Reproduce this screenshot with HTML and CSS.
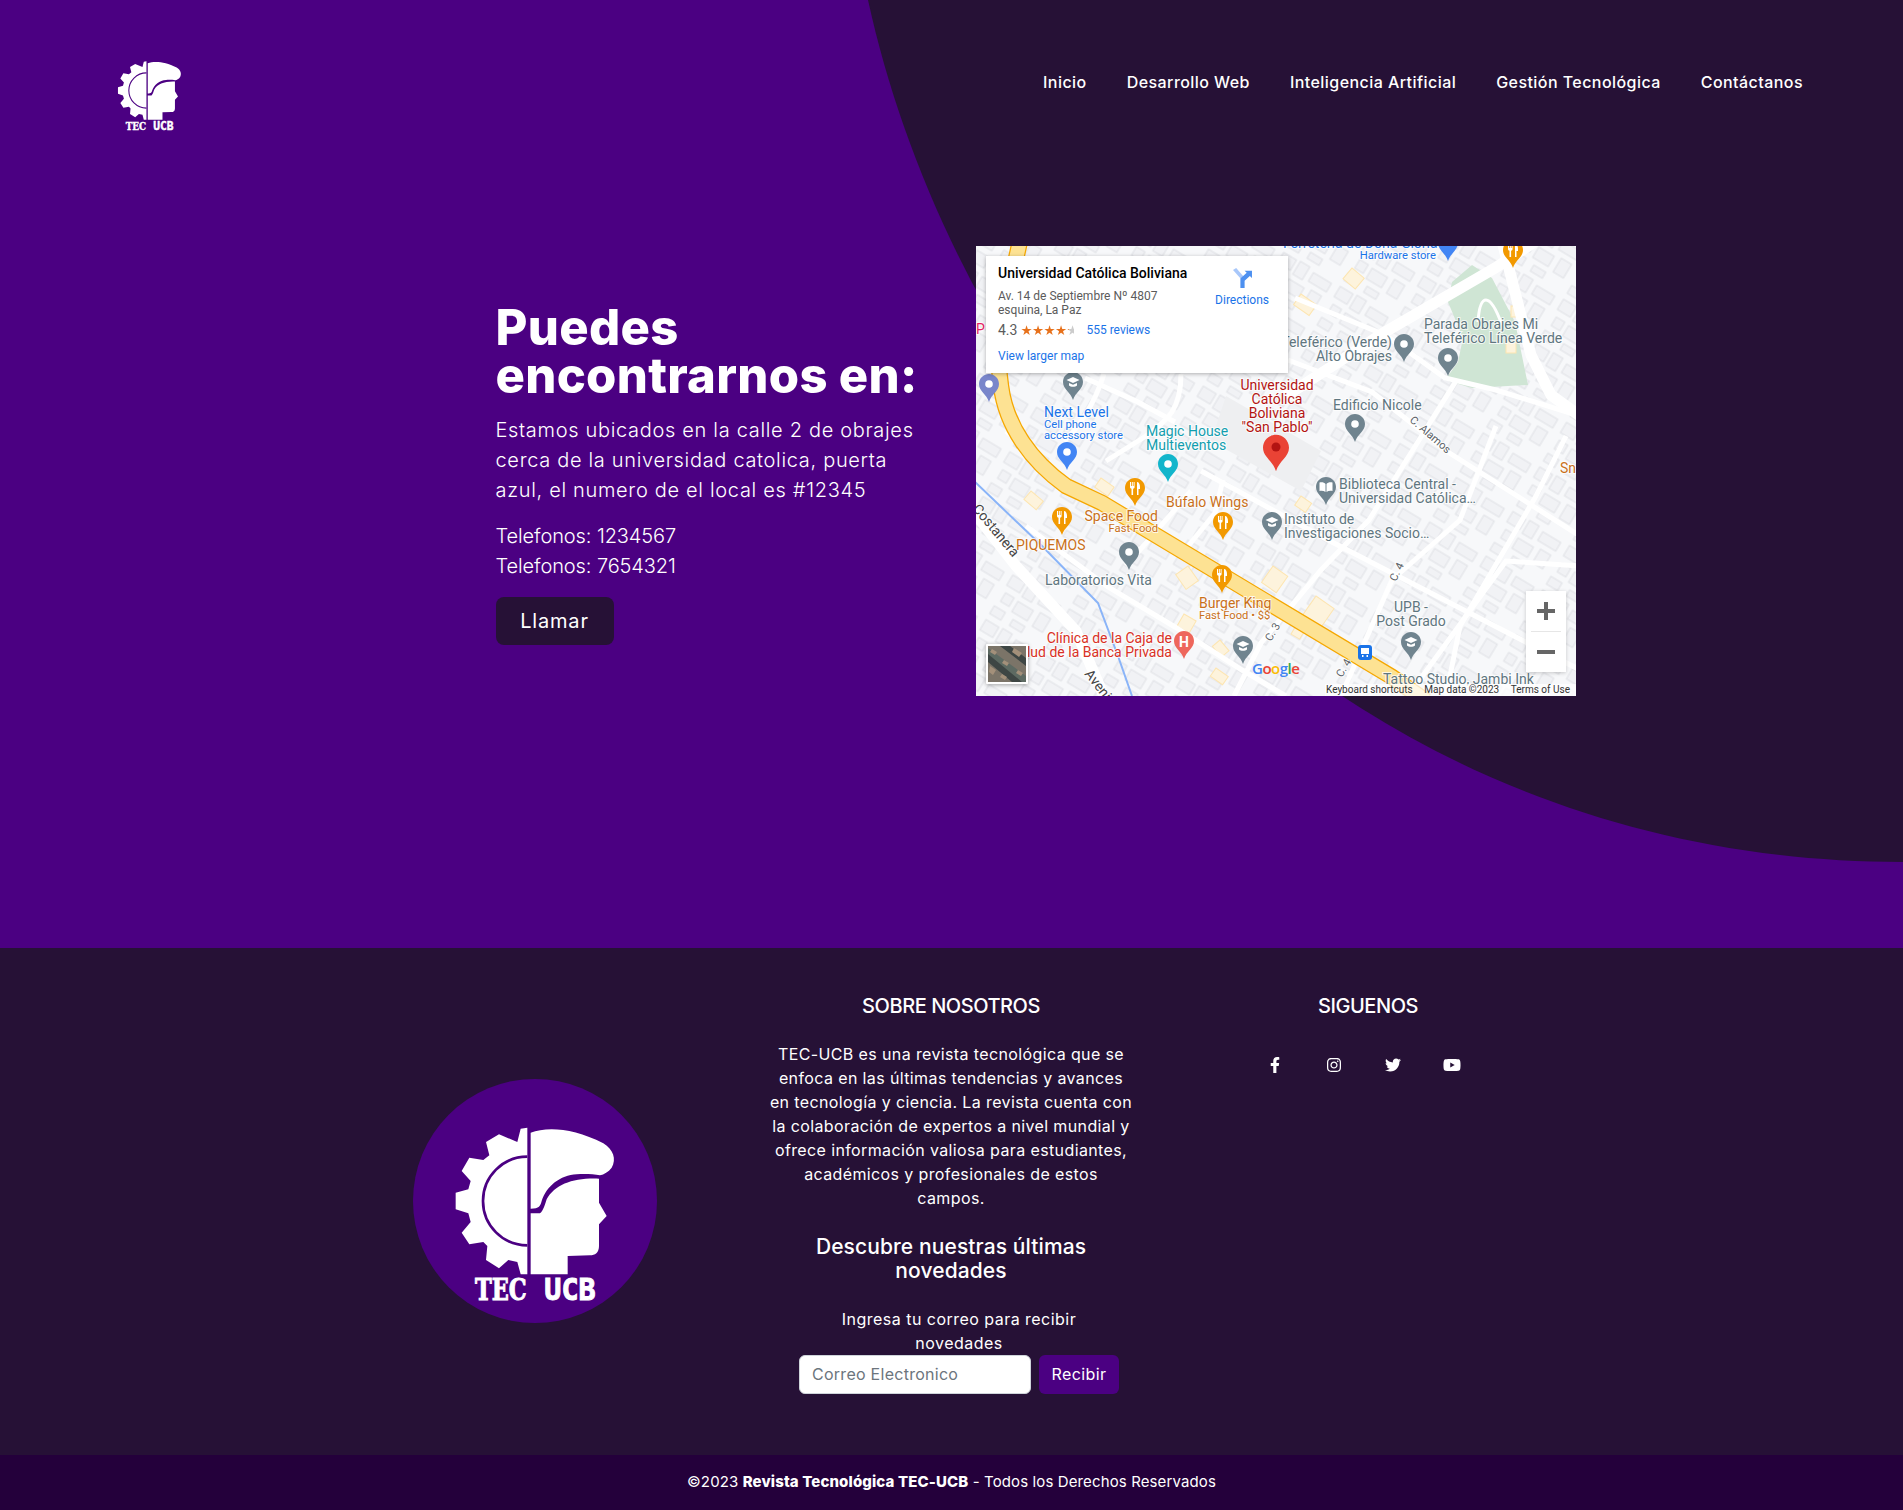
FILE: index.html
```html
<!DOCTYPE html>
<html lang="es">
<head>
<meta charset="utf-8">
<title>TEC-UCB</title>
<link rel="stylesheet" href="styles.css">
</head>
<body>
<svg class="defs" width="0" height="0" aria-hidden="true">
  <defs>
    <symbol id="logo" viewBox="39 29 732 732">
      <path class="w" d="M392 190C440 172 520 175 610 222C640 240 650 270 635 295C625 308 612 315 600 318C580 314 550 313 530 315C480 318 440 350 425 395C421 410 418 418 392 418Z"/>
      <path class="w" d="M392 432H420C430 425 435 405 440 390C465 345 520 325 597 328V400L620 440L597 465V530C597 550 585 558 570 558L503 560V615H392Z"/>
      <path class="w" d="M382 175L362 178L352 218L297 195L258 218L268 258L250 272L208 265L185 305L212 335L205 360L167 370V420L205 432L212 458L185 490L208 525L250 518L262 530L258 572L297 597L325 572L352 578L362 615H382Z"/>
      <path class="logo-arc" d="M382 262A131 131 0 0 0 382 528"/>
      <text class="logo-text slab" x="225" y="693" textLength="155" lengthAdjust="spacingAndGlyphs">TEC</text>
      <text class="logo-text" x="433" y="693" textLength="154" lengthAdjust="spacingAndGlyphs">UCB</text>
    </symbol>
    <symbol id="pin" viewBox="0 0 20 28"><path d="M10 0C4.500 0 0 4.400 0 10c0 7 7.500 10 10 18 2.500-8 10-11 10-18C20 4.400 15.500 0 10 0z"/></symbol>
    <symbol id="pin-dot" viewBox="0 0 20 28"><path d="M10 0C4.500 0 0 4.400 0 10c0 7 7.500 10 10 18 2.500-8 10-11 10-18C20 4.400 15.500 0 10 0z"/><circle class="w" cx="10" cy="10" r="3.800"/></symbol>
    <symbol id="pin-food" viewBox="0 0 20 28"><path d="M10 0C4.500 0 0 4.400 0 10c0 7 7.500 10 10 18 2.500-8 10-11 10-18C20 4.400 15.500 0 10 0z"/><path class="w" d="M5 4h1v4h.8V4h1v4h.8V4h1v5c0 1-.7 1.600-1.500 1.800V17H6.500v-6.200C5.700 10.600 5 10 5 9zM12 4c1.800 0 3 2 3 5v2h-1.500v6H12z"/></symbol>
    <symbol id="pin-grad" viewBox="0 0 20 28"><path d="M10 0C4.500 0 0 4.400 0 10c0 7 7.500 10 10 18 2.500-8 10-11 10-18C20 4.400 15.500 0 10 0z"/><path class="w" d="M10 5L3.500 8L10 11L16.500 8zM6 11V13.500C7.500 15.200 12.500 15.200 14 13.500V11L10 12.800z"/></symbol>
    <symbol id="pin-book" viewBox="0 0 20 28"><path d="M10 0C4.500 0 0 4.400 0 10c0 7 7.500 10 10 18 2.500-8 10-11 10-18C20 4.400 15.500 0 10 0z"/><path class="w" d="M3.500 5.500C6 5 8.500 5.500 9.500 7v8C8 14 6 13.600 3.500 14zM16.500 5.500C14 5 11.500 5.500 10.500 7v8C12 14 14 13.600 16.500 14z"/></symbol>
    <pattern id="blocks" width="66" height="52" patternUnits="userSpaceOnUse" patternTransform="rotate(31)">
      <rect class="bld" x="3" y="3" width="15" height="12"/>
      <rect class="bld" x="22" y="2" width="11" height="15"/>
      <rect class="bld" x="39" y="5" width="21" height="10"/>
      <rect class="bld" x="6" y="22" width="10" height="10"/>
      <rect class="bld" x="21" y="23" width="18" height="12"/>
      <rect class="bld" x="46" y="21" width="12" height="16"/>
      <rect class="bld" x="3" y="39" width="13" height="9"/>
      <rect class="bld" x="26" y="41" width="14" height="7"/>
    </pattern>
  </defs>
</svg>

<section class="hero">
  <svg class="blob" viewBox="0 0 1903 948" aria-hidden="true"><path d="M868 0C960 420 1330 862 1903 862V0Z"/></svg>
  <header class="topbar">
    <svg class="logo-small" role="img" aria-label="TEC UCB"><use href="#logo"/></svg>
    <nav class="nav">
      <a href="#">Inicio</a>
      <a href="#">Desarrollo Web</a>
      <a href="#">Inteligencia Artificial</a>
      <a href="#">Gestión Tecnológica</a>
      <a href="#">Contáctanos</a>
    </nav>
  </header>
  <div class="hero-body">
    <div class="hero-text">
      <h1>Puedes<br>encontrarnos en:</h1>
      <p class="lead">Estamos ubicados en la calle 2 de obrajes<br>cerca de la universidad catolica, puerta<br>azul, el numero de el local es #12345</p>
      <p class="phones">Telefonos: 1234567<br>Telefonos: 7654321</p>
      <a class="call" href="#">Llamar</a>
    </div>
    <div class="map">
      <svg class="map-art" viewBox="0 0 600 450" width="600" height="450">
        <rect class="land" width="600" height="450"/>
        <rect width="600" height="450" fill="url(#blocks)"/>
        <polygon class="campus" points="250,150 345,205 325,245 235,195"/>
        <polygon class="park" points="476,36 496,19 516,32 539,76 552,139 496,142 469,134 482,116 487,92 472,56"/>
        <path class="rd-thin" d="M502 76C503 60 506 54 510 54C516 54 522 68 526 79"/>
        <g class="yb">
          <rect x="0" y="0" width="19" height="13" transform="translate(325 48) rotate(35)"/>
          <rect x="0" y="0" width="16" height="14" transform="translate(376 22) rotate(40)"/>
          <rect x="0" y="0" width="10" height="11" transform="translate(535 60)"/>
          <rect x="0" y="0" width="10" height="11" transform="translate(530 96)"/>
          <rect x="0" y="0" width="16" height="11" transform="translate(55 245) rotate(40)"/>
          <rect x="0" y="0" width="16" height="11" transform="translate(125 232) rotate(35)"/>
          <rect x="0" y="0" width="18" height="15" transform="translate(212 320) rotate(55)"/>
          <rect x="0" y="0" width="13" height="11" transform="translate(325 250) rotate(35)"/>
          <rect x="0" y="0" width="18" height="20" transform="translate(297 320) rotate(35)"/>
          <rect x="0" y="0" width="22" height="25" transform="translate(340 350) rotate(35)"/>
          <rect x="0" y="0" width="14" height="14" transform="translate(208 368) rotate(30)"/>
          <rect x="0" y="0" width="14" height="10" transform="translate(244 394) rotate(50)"/>
          <rect x="0" y="0" width="15" height="10" transform="translate(240 422) rotate(35)"/>
          <rect x="0" y="0" width="10" height="14" transform="translate(322 376) rotate(30)"/>
        </g>
        <g class="rd">
          <path d="M109 132L162 156L199 176"/>
          <path d="M225 225L352 294L604 424"/>
          <path d="M312 114L396 146L472 206L604 290"/>
          <path d="M319 52L409 89L469 132L520 144L604 170"/>
          <path d="M50 280L132 341L199 381L266 424L310 450"/>
          <path d="M209 304L239 267L247 234"/>
          <path d="M258 450L285 397L345 324L393 274L480 135"/>
          <path d="M365 450L416 334L484 274L520 180"/>
          <path d="M470 450L484 380L560 250L590 190"/>
          <path d="M205 128C205 165 190 175 170 190L130 215"/>
          <path d="M128 128C118 160 100 185 88 195"/>
          <path d="M30 185L110 250"/>
          <path d="M432 450L530 315L604 320"/>
          <path d="M150 320L215 245"/>
        </g>
        <g class="rd-wide">
          <path d="M310 150L409 86L519 22L560 -5"/>
          <path d="M526 -5L555 109L575 149L604 170"/>
          <path d="M-5 262L40 320L100 385L130 455"/>
        </g>
        <path class="river" d="M-1 236L66 300L122 357L142 410L156 450"/>
        <path class="main-out" d="M44 -5C32 50 18 100 25 140C30 180 55 215 90 240L126 257L416 431L450 455"/>
        <path class="main-in" d="M44 -5C32 50 18 100 25 140C30 180 55 215 90 240L126 257L416 431L450 455"/>

        <text class="lb blue" x="307" y="2">Ferretería de Doña Gloria</text>
        <text class="lb blue sm" x="460" y="13" text-anchor="end">Hardware store</text>
        <text class="lb pink" x="0" y="88">P</text>
        <text class="lb gray" x="448" y="83">Parada Obrajes Mi</text>
        <text class="lb gray" x="448" y="97">Teleférico Línea Verde</text>
        <text class="lb gray" x="416" y="101" text-anchor="end">Teleférico (Verde)</text>
        <text class="lb gray" x="416" y="115" text-anchor="end">Alto Obrajes</text>
        <text class="lb gray" x="357" y="164">Edificio Nicole</text>
        <text class="lb road" transform="translate(433 175) rotate(41)">C. Alamos</text>
        <text class="lb red" x="301" y="144" text-anchor="middle">Universidad</text>
        <text class="lb red" x="301" y="158" text-anchor="middle">Católica</text>
        <text class="lb red" x="301" y="172" text-anchor="middle">Boliviana</text>
        <text class="lb red" x="301" y="186" text-anchor="middle">"San Pablo"</text>
        <text class="lb orange" x="584" y="227">Sn</text>
        <text class="lb gray" x="363" y="243">Biblioteca Central -</text>
        <text class="lb gray" x="363" y="257">Universidad Católica…</text>
        <text class="lb gray" x="308" y="278">Instituto de</text>
        <text class="lb gray" x="308" y="292">Investigaciones Socio…</text>
        <text class="lb orange" x="190" y="261">Búfalo Wings</text>
        <text class="lb orange" x="182" y="275" text-anchor="end">Space Food</text>
        <text class="lb orange sm" x="182" y="286" text-anchor="end">Fast Food</text>
        <text class="lb orange" x="40" y="304">PIQUEMOS</text>
        <text class="lb gray" x="69" y="339">Laboratorios Vita</text>
        <text class="lb orange" x="223" y="362">Burger King</text>
        <text class="lb orange sm" x="223" y="373">Fast Food • $$</text>
        <text class="lb hosp" x="196" y="397" text-anchor="end">Clínica de la Caja de</text>
        <text class="lb hosp" x="196" y="411" text-anchor="end">Salud de la Banca Privada</text>
        <text class="lb gray" x="435" y="366" text-anchor="middle">UPB -</text>
        <text class="lb gray" x="435" y="380" text-anchor="middle">Post Grado</text>
        <text class="lb gray" x="407" y="438">Tattoo Studio, Jambi Ink</text>
        <text class="lb road" transform="translate(295 396) rotate(-60)">C. 3</text>
        <text class="lb road" transform="translate(420 336) rotate(-65)">C. 4</text>
        <text class="lb road" transform="translate(366 432) rotate(-60)">C. 4</text>
        <text class="lb road lg" transform="translate(-4 263) rotate(50)">Costanera</text>
        <text class="lb road lg" transform="translate(108 428) rotate(52)">Avenida</text>
        <text class="lb blue" x="68" y="171">Next Level</text>
        <text class="lb blue sm" x="68" y="182">Cell phone</text>
        <text class="lb blue sm" x="68" y="193">accessory store</text>
        <text class="lb teal" x="170" y="190">Magic House</text>
        <text class="lb teal" x="170" y="204">Multieventos</text>
        <text class="google" x="276" y="428"><tspan fill="#4285f4">G</tspan><tspan fill="#ea4335">o</tspan><tspan fill="#fbbc04">o</tspan><tspan fill="#4285f4">g</tspan><tspan fill="#34a853">l</tspan><tspan fill="#ea4335">e</tspan></text>

        <use class="p-orange" href="#pin-food" x="527" y="-6" width="20" height="28"/>
        <use class="p-blue" href="#pin" x="462" y="-13" width="20" height="28"/>
        <use class="p-gray" href="#pin-dot" x="418" y="88" width="20" height="28"/>
        <use class="p-gray" href="#pin-dot" x="462" y="102" width="20" height="28"/>
        <use class="p-gray" href="#pin-dot" x="369" y="168" width="20" height="28"/>
        <use class="p-gray" href="#pin-grad" x="87" y="126" width="20" height="28"/>
        <use class="p-fuel" href="#pin-dot" x="3" y="128" width="20" height="28"/>
        <use class="p-blue" href="#pin-dot" x="81" y="196" width="20" height="28"/>
        <use class="p-teal" href="#pin-dot" x="182" y="208" width="20" height="28"/>
        <use class="p-gray" href="#pin-book" x="340" y="231" width="20" height="28"/>
        <use class="p-gray" href="#pin-grad" x="286" y="266" width="20" height="28"/>
        <use class="p-orange" href="#pin-food" x="149" y="232" width="20" height="28"/>
        <use class="p-orange" href="#pin-food" x="237" y="266" width="20" height="28"/>
        <use class="p-orange" href="#pin-food" x="76" y="261" width="20" height="28"/>
        <use class="p-orange" href="#pin-food" x="236" y="319" width="20" height="28"/>
        <use class="p-gray" href="#pin-dot" x="143" y="296" width="20" height="28"/>
        <use class="p-gray" href="#pin-grad" x="425" y="386" width="20" height="28"/>
        <use class="p-gray" href="#pin-grad" x="257" y="390" width="20" height="28"/>
        <use class="p-hosp" href="#pin" x="198" y="385" width="20" height="28"/>
        <text class="h-mark" x="208" y="401" text-anchor="middle">H</text>
        <rect class="bus" x="382" y="399" width="14" height="15" rx="3"/>
        <path class="w" d="M385 402h8v6h-8zM386 409h1.500v2H386zM390.500 409H392v2h-1.500z"/>
        <use class="p-red" href="#pin" x="287" y="188" width="26" height="38"/>
        <circle class="pin-core" cx="300" cy="201" r="4.500"/>

        <rect class="thumb" x="10" y="398" width="42" height="40" rx="1"/>
        <g class="sat">
          <rect x="12" y="400" width="38" height="36"/>
          <path class="sat-a" d="M12 402L50 430V436H40L12 414Z"/>
          <path class="sat-b" d="M12 408L46 436H36L12 416ZM24 400L50 420V412L34 400Z"/>
          <path class="sat-c" d="M14 420l6 4-3 5-4-3zM38 402l8 5-3 4-7-5zM28 414l5 3-2 3-5-3zM16 403l5 3-2 3-5-3zM42 424l5 3-2 3-5-3zM26 428l5 3-2 3-5-3z"/>
        </g>
      </svg>

      <div class="card">
        <div class="card-main">
          <div class="card-title">Universidad Católica Boliviana</div>
          <div class="card-addr">Av. 14 de Septiembre Nº 4807<br>esquina, La Paz</div>
          <div class="card-rate"><span class="score">4.3</span><span class="stars">★★★★★</span><a class="reviews" href="#">555 reviews</a></div>
          <a class="larger" href="#">View larger map</a>
        </div>
        <div class="card-dir">
          <svg class="dir-icon" viewBox="0 0 18 19" width="19" height="20"><path class="dir-l" d="M0 2L3 0L10 8L8 11Z"/><path class="dir-r" d="M7 19V10L13 4.500L11 2.500H18V9.500L16 7.500L11 12V19Z"/></svg>
          <a class="dir-text" href="#">Directions</a>
        </div>
      </div>

      <div class="zoomer">
        <button class="zoom-btn" aria-label="Zoom in"><svg viewBox="0 0 18 18" width="18" height="18"><path d="M7 0h4v7h7v4h-7v7H7v-7H0V7h7z"/></svg></button>
        <span class="zoom-sep"></span>
        <button class="zoom-btn" aria-label="Zoom out"><svg viewBox="0 0 18 18" width="18" height="18"><path d="M0 7h18v4H0z"/></svg></button>
      </div>

      <div class="attrib"><span>Keyboard shortcuts</span><span>Map data ©2023</span><span>Terms of Use</span></div>
    </div>
  </div>
</section>

<footer class="foot">
  <svg class="logo-big" viewBox="39 29 732 732" role="img" aria-label="TEC UCB"><circle class="logo-disc" cx="405" cy="395" r="366"/><use href="#logo" x="39" y="29" width="732" height="732"/></svg>
  <div class="about">
    <h3>SOBRE NOSOTROS</h3>
    <p class="about-text">TEC-UCB es una revista tecnológica que se<br>enfoca en las últimas tendencias y avances<br>en tecnología y ciencia. La revista cuenta con<br>la colaboración de expertos a nivel mundial y<br>ofrece información valiosa para estudiantes,<br>académicos y profesionales de estos<br>campos.</p>
    <h4>Descubre nuestras últimas<br>novedades</h4>
    <div class="news">
      <p>Ingresa tu correo para recibir<br>novedades</p>
      <form class="news-form">
        <input class="news-input" type="text" placeholder="Correo Electronico">
        <button class="news-btn" type="button">Recibir</button>
      </form>
    </div>
  </div>
  <div class="follow">
    <h3>SIGUENOS</h3>
    <div class="socials">
      <a href="#" aria-label="Facebook"><svg viewBox="0 0 320 512" width="10" height="16"><path d="M279.14 288l14.22-92.66h-88.91v-60.13c0-25.35 12.42-50.06 52.24-50.06h40.42V6.26S260.43 0 225.36 0c-73.22 0-121.08 44.38-121.08 124.72v70.62H22.89V288h81.39v224h100.17V288z"/></svg></a>
      <a href="#" aria-label="Instagram"><svg viewBox="0 0 448 512" width="14" height="16"><path d="M224.1 141c-63.6 0-114.9 51.3-114.9 114.9s51.3 114.9 114.9 114.9S339 319.5 339 255.9 287.7 141 224.1 141zm0 189.6c-41.1 0-74.7-33.5-74.7-74.7s33.5-74.7 74.7-74.7 74.7 33.5 74.7 74.7-33.6 74.7-74.7 74.7zm146.4-194.3c0 14.9-12 26.8-26.8 26.8-14.9 0-26.8-12-26.8-26.8s12-26.8 26.8-26.8 26.8 12 26.8 26.8zm76.1 27.2c-1.7-35.9-9.9-67.7-36.2-93.9-26.2-26.2-58-34.4-93.9-36.2-37-2.1-147.9-2.1-184.9 0-35.8 1.7-67.6 9.9-93.9 36.1s-34.4 58-36.2 93.9c-2.1 37-2.1 147.9 0 184.9 1.7 35.9 9.9 67.7 36.2 93.9s58 34.4 93.9 36.2c37 2.1 147.9 2.1 184.9 0 35.9-1.7 67.7-9.9 93.9-36.2 26.2-26.2 34.4-58 36.2-93.9 2.1-37 2.1-147.8 0-184.8zM398.8 388c-7.800 19.6-22.9 34.7-42.6 42.6-29.5 11.7-99.5 9-132.1 9s-102.7 2.6-132.1-9c-19.6-7.800-34.7-22.9-42.6-42.6-11.7-29.5-9-99.5-9-132.1s-2.6-102.7 9-132.1c7.800-19.6 22.9-34.7 42.6-42.6 29.5-11.7 99.5-9 132.1-9s102.7-2.6 132.1 9c19.6 7.800 34.7 22.9 42.6 42.6 11.7 29.5 9 99.5 9 132.1s2.700 102.7-9 132.1z"/></svg></a>
      <a href="#" aria-label="Twitter"><svg viewBox="0 0 512 512" width="16" height="16"><path d="M459.37 151.716c.325 4.548.325 9.097.325 13.645 0 138.72-105.583 298.558-298.558 298.558-59.452 0-114.68-17.219-161.137-47.106 8.447.974 16.568 1.299 25.34 1.299 49.055 0 94.213-16.568 130.274-44.832-46.132-.975-84.792-31.188-98.112-72.772 6.498.974 12.995 1.624 19.818 1.624 9.421 0 18.843-1.3 27.614-3.573-48.081-9.747-84.143-51.98-84.143-102.985v-1.299c13.969 7.797 30.214 12.67 47.431 13.319-28.264-18.843-46.781-51.005-46.781-87.391 0-19.492 5.197-37.36 14.294-52.954 51.655 63.675 129.3 105.258 216.365 109.807-1.624-7.797-2.599-15.918-2.599-24.04 0-57.828 46.782-104.934 104.934-104.934 30.213 0 57.502 12.67 76.67 33.137 23.715-4.548 46.456-13.32 66.599-25.34-7.798 24.366-24.366 44.833-46.132 57.827 21.117-2.273 41.584-8.122 60.426-16.243-14.292 20.791-32.161 39.308-52.628 54.253z"/></svg></a>
      <a href="#" aria-label="YouTube"><svg viewBox="0 0 576 512" width="18" height="16"><path d="M549.655 124.083c-6.281-23.65-24.787-42.276-48.284-48.597C458.781 64 288 64 288 64S117.22 64 74.629 75.486c-23.497 6.322-42.003 24.947-48.284 48.597-11.412 42.867-11.412 132.305-11.412 132.305s0 89.438 11.412 132.305c6.281 23.65 24.787 41.5 48.284 47.821C117.22 448 288 448 288 448s170.78 0 213.371-11.486c23.497-6.321 42.003-24.171 48.284-47.821 11.412-42.867 11.412-132.305 11.412-132.305s0-89.438-11.412-132.305zm-317.51 213.508V175.185l142.739 81.205-142.739 81.201z"/></svg></a>
    </div>
  </div>
</footer>

<div class="copyright">©2023 <strong>Revista Tecnológica TEC-UCB</strong> - Todos los Derechos Reservados</div>
</body>
</html>
```

FILE: styles.css
```css
* { box-sizing: border-box; }
html, body { margin: 0; padding: 0; }
body { font-family: Inter, "Noto Sans", sans-serif; color: #fff; background: #261136; }
a { color: inherit; text-decoration: none; }
p, h1, h3, h4 { margin: 0; }
.defs { position: absolute; width: 0; height: 0; }

.w { fill: #fff; }
.logo-arc { fill: none; stroke: #4b0082; stroke-width: 8; }
.logo-text { font-family: "DejaVu Sans Mono", monospace; font-weight: 700; font-size: 89px; fill: #fff; stroke: #fff; stroke-width: 3px; }
.logo-text.slab { font-family: "DejaVu Serif", serif; }
.logo-disc { fill: #4b0082; }

.hero { position: relative; height: 948px; background: #4b0082; overflow: hidden; }
.blob { position: absolute; left: 0; top: 0; width: 1903px; height: 948px; }
.blob path { fill: #261136; }
.topbar { position: relative; display: flex; justify-content: space-between; padding: 42px 100px 0 101px; }
.logo-small { width: 97px; height: 97px; }
.nav { display: flex; gap: 40px; font-size: 16px; font-weight: 500; line-height: 20px; padding-top: 30px; letter-spacing: 0.44px; }

.hero-body { position: relative; display: flex; align-items: center; padding: 107px 0 0 495.500px; }
.hero-text { width: 480.500px; flex: none; }
h1 { margin-top: 6px; font-size: 49px; line-height: 48px; font-weight: 800; letter-spacing: 0.3px; }
.lead, .phones { font-size: 20px; line-height: 30px; font-weight: 300; }
.lead { margin-top: 15px; letter-spacing: 0.68px; }
.phones { margin-top: 16px; letter-spacing: -0.1px; }
.call { display: block; width: 118px; height: 48px; margin-top: 16px; background: #261136; border-radius: 8px; text-align: center; font-size: 20px; line-height: 48px; letter-spacing: 0.8px; }

.map { position: relative; width: 600px; height: 450px; flex: none; overflow: hidden; font-family: Roboto, Arial, sans-serif; }
.map-art { display: block; }
.land { fill: #f7f8fa; }
.bld { fill: #f1f2f5; stroke: #e0e1e6; stroke-width: 1; }
.campus { fill: #eeeff1; }
.park { fill: #cfe5d4; }
.yb rect { fill: #fdf3dc; stroke: #fde5b0; stroke-width: 1; }
.rd path { fill: none; stroke: #fff; stroke-width: 5; }
.rd-wide path { fill: none; stroke: #fff; stroke-width: 11; }
.rd-thin { fill: none; stroke: #fff; stroke-width: 3; }
.river { fill: none; stroke: #8ab4f8; stroke-width: 2; }
.main-out { fill: none; stroke: #f5a700; stroke-width: 16.500; }
.main-in { fill: none; stroke: #fde293; stroke-width: 14; }

.lb { font-family: Roboto, Arial, sans-serif; font-size: 14px; paint-order: stroke; stroke: #fff; stroke-width: 2px; stroke-opacity: .75; }
.sm { font-size: 11.200px; }
.blue { fill: #1a73e8; }
.gray { fill: #5f7680; }
.red { fill: #b31412; }
.orange { fill: #c9701a; }
.hosp { fill: #d93025; }
.teal { fill: #129eaf; }
.pink { fill: #e91e63; }
.road { font-size: 11px; fill: #5a5f66; }
.road.lg { font-size: 14px; fill: #444; }
.google { font-family: "Open Sans", Arial, sans-serif; font-size: 15px; letter-spacing: -0.5px; font-weight: 600; }
.p-orange { fill: #f29900; }
.p-blue { fill: #4285f4; }
.p-gray { fill: #70848f; }
.p-fuel { fill: #7986cb; }
.p-teal { fill: #12b5cb; }
.p-hosp { fill: #ee675c; }
.p-red { fill: #ea4335; }
.pin-core { fill: #b31412; }
.h-mark { font-family: Roboto, Arial, sans-serif; font-size: 14px; font-weight: 700; fill: #fff; }
.bus { fill: #1a73e8; }
.thumb { fill: #fff; filter: drop-shadow(0 1px 2px rgba(0,0,0,.35)); }
.sat rect { fill: #7b7468; }
.sat-a { fill: #5d6a62; }
.sat-b { fill: #3e4644; }
.sat-c { fill: #a3907a; }

.card { position: absolute; left: 10px; top: 10px; width: 302px; height: 117px; background: #fff; box-shadow: 0 1px 4px rgba(0,0,0,.3); display: flex; justify-content: space-between; padding: 9px 19px 0 12px; color: #5b5b5b; font-size: 12px; }
.card-title { font-size: 14px; line-height: 16px; font-weight: 500; color: #000; }
.card-addr { margin-top: 8px; line-height: 14px; }
.card-rate { display: flex; align-items: center; height: 18px; margin-top: 4px; }
.score { font-size: 14px; }
.stars { font-family: "DejaVu Sans", sans-serif; font-size: 13.500px; letter-spacing: -0.6px; margin-left: 3px; width: 54px; background: linear-gradient(90deg, #e7711b 90%, #ccc 90%); -webkit-background-clip: text; background-clip: text; color: transparent; }
.reviews { margin-left: 12px; color: #1a73e8; }
.larger { display: block; margin-top: 10px; color: #1a73e8; }
.card-dir { display: flex; flex-direction: column; align-items: center; padding-top: 3px; }
.dir-icon { display: block; }
.dir-l { fill: #a8c7fa; }
.dir-r { fill: #4d90f0; }
.dir-text { margin-top: 5px; color: #1a73e8; }

.zoomer { position: absolute; right: 10px; top: 345px; width: 40px; height: 81px; background: #fff; box-shadow: 0 1px 4px rgba(0,0,0,.2); display: flex; flex-direction: column; align-items: center; }
.zoom-btn { width: 40px; height: 40px; border: 0; padding: 0; background: none; display: flex; align-items: center; justify-content: center; }
.zoom-btn path { fill: #666; }
.zoom-sep { width: 30px; height: 1px; background: #e6e6e6; }

.attrib { position: absolute; right: 0; bottom: 0; width: 251px; height: 12px; padding: 0 6px 0 1px; background: rgba(255,255,255,.75); display: flex; justify-content: space-between; font-size: 10px; line-height: 12px; color: #333; }

.foot { display: flex; height: 507px; padding: 43px 0 0 413px; background: #261136; }
.logo-big { width: 244px; height: 244px; margin: 88px 104px 0 0; flex: none; }
.about { width: 380px; flex: none; text-align: center; }
h3 { font-size: 20px; line-height: 30px; font-weight: 500; letter-spacing: -0.45px; }
.about-text { margin-top: 20.500px; font-size: 16px; line-height: 24px; letter-spacing: 0.38px; }
h4 { margin-top: 25px; font-size: 21px; line-height: 24px; font-weight: 500; letter-spacing: 0.1px; }
.news { margin-top: 24px; padding-left: 16px; font-size: 16px; line-height: 24px; letter-spacing: 0.47px; }
.news-form { display: flex; justify-content: center; gap: 8px; }
.news-input { width: 232px; height: 39px; padding: 0 12px; border: 1px solid #ced4da; border-radius: 6px; font: 16px Inter, sans-serif; letter-spacing: 0.27px; background: #fff; }
.news-input::placeholder { color: #6c757d; opacity: 1; }
.news-btn { width: 80px; height: 39px; border: 0; border-radius: 6px; background: #4b0082; color: #fff; font: 16px Inter, sans-serif; letter-spacing: 0.4px; padding: 0; }
.follow { width: 300px; margin-left: 77px; flex: none; text-align: center; }
.socials { display: flex; justify-content: center; margin-top: 34px; padding-right: 10px; }
.socials a { width: 59px; height: 20px; display: flex; align-items: center; justify-content: center; }
.socials path { fill: #fff; }

.copyright { height: 55px; background: #24003b; text-align: center; font-size: 15px; line-height: 54px; letter-spacing: 0.12px; }
.copyright strong { font-weight: 800; }
```
